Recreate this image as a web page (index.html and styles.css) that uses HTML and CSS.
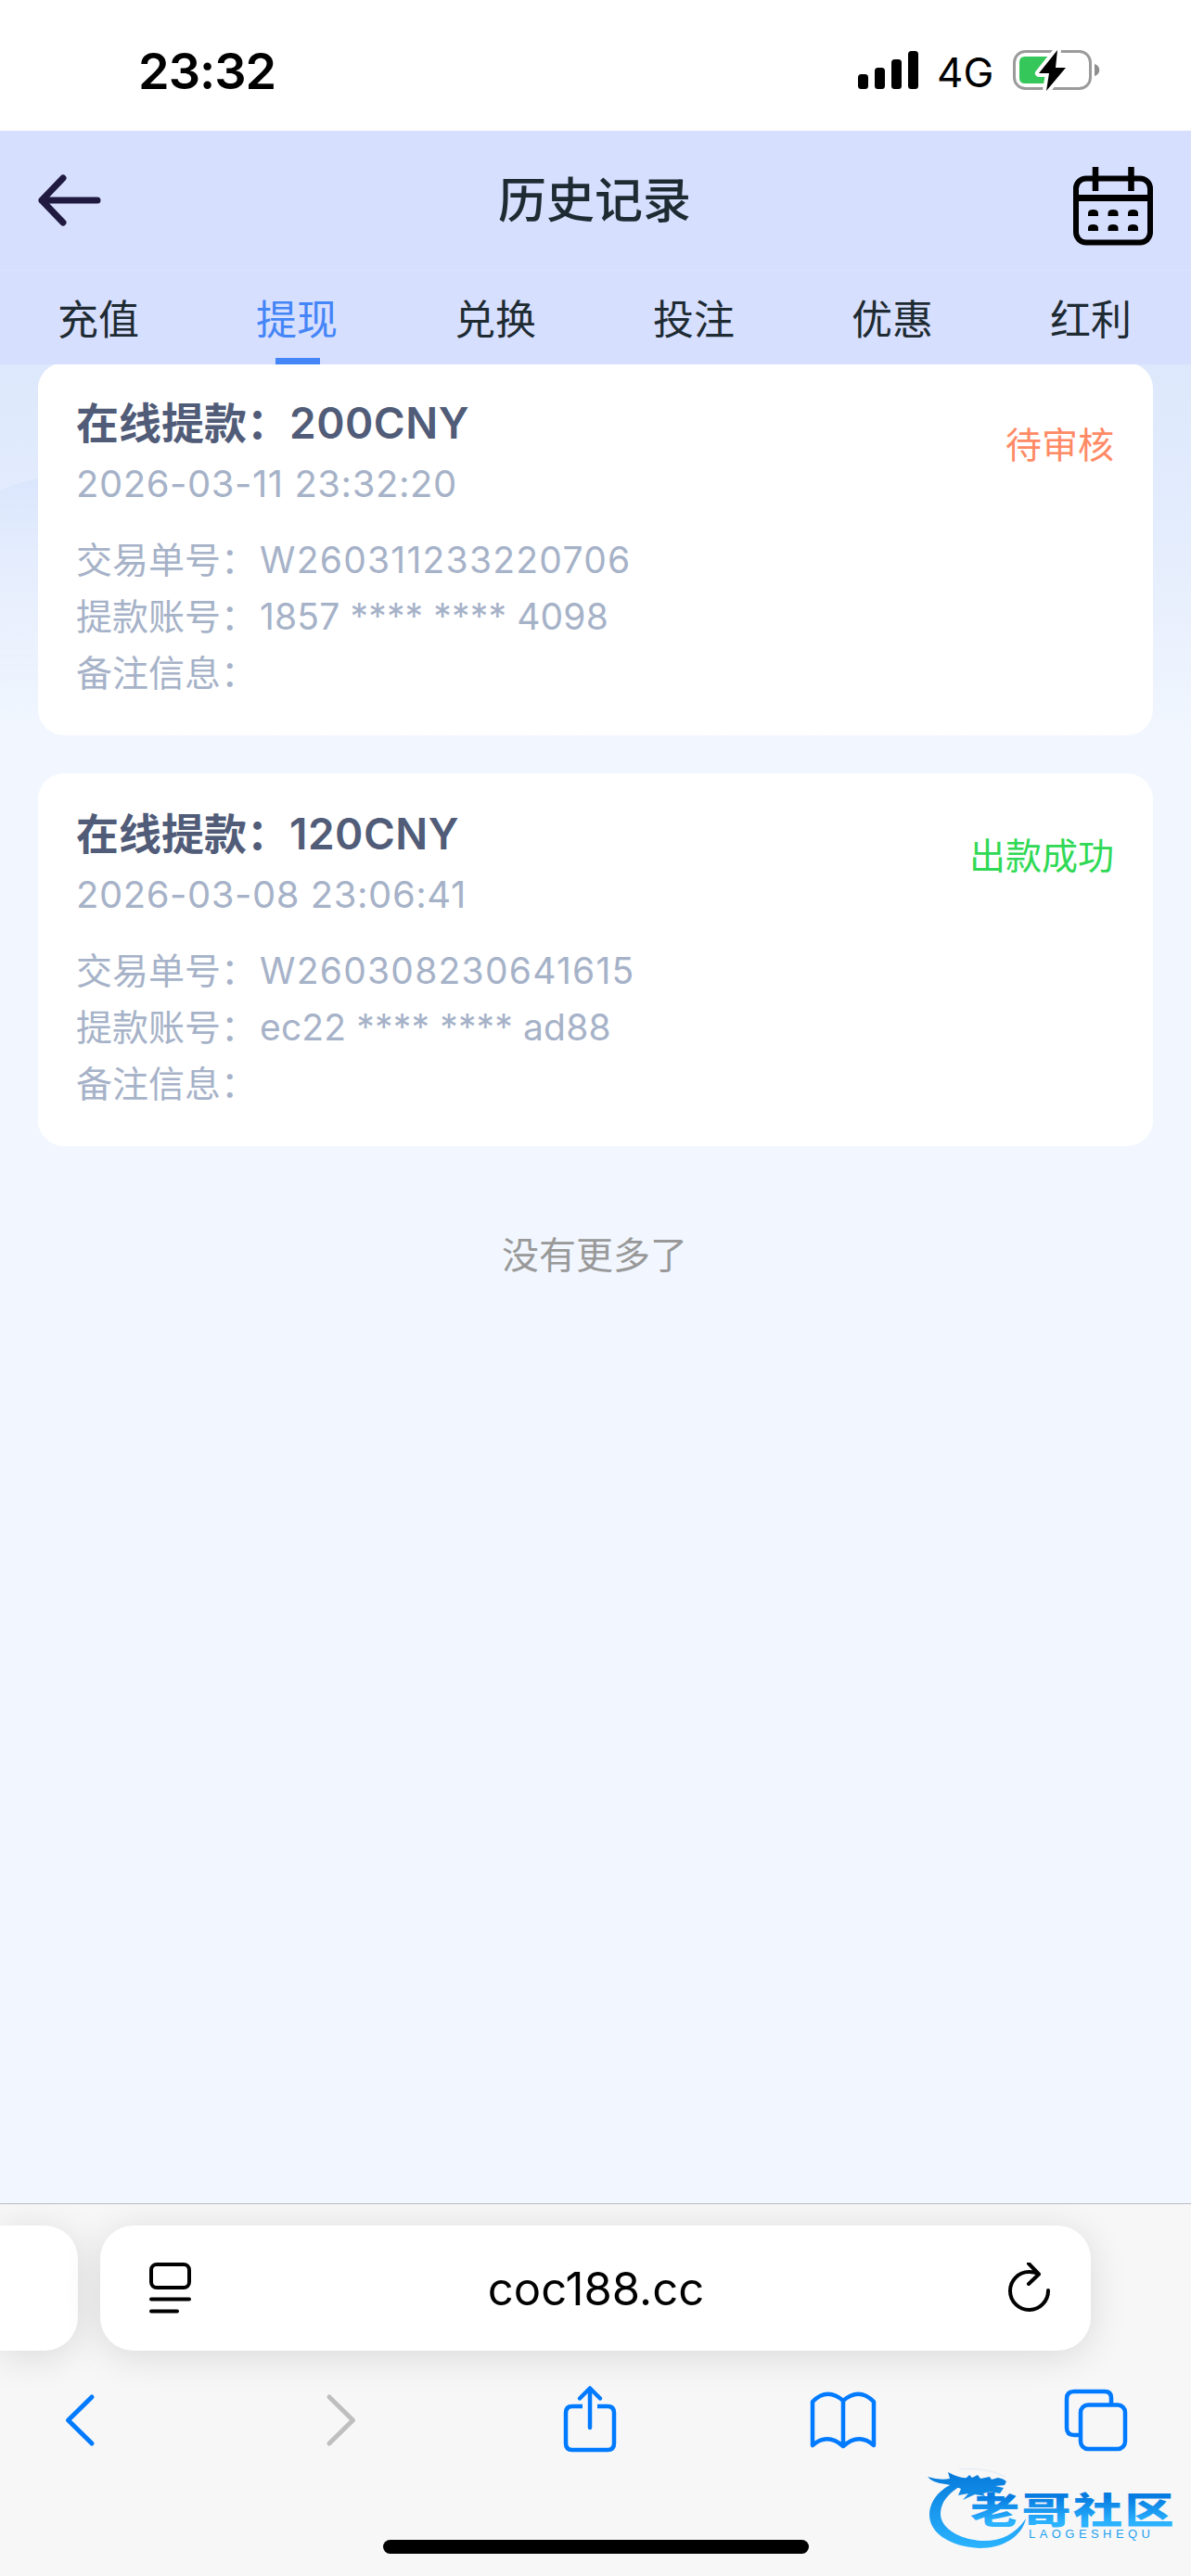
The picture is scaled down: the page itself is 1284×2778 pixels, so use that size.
FILE: index.html
```html
<!DOCTYPE html>
<html lang="zh-CN">
<head>
    <meta charset="UTF-8">
    <meta name="viewport" content="width=device-width, initial-scale=1.0">
    <title>历史记录</title>
    <link rel="stylesheet" href="styles.css">
</head>
<body>
    <div class="status-bar">
        <span class="time">23:32</span>
        <div class="status-icons">
            <svg class="signal" width="66" height="42" viewBox="0 0 66 42">
                <rect x="0" y="25" width="11" height="16" rx="3.5"/>
                <rect x="18" y="18" width="11" height="23" rx="3.5"/>
                <rect x="36" y="9" width="11" height="32" rx="3.5"/>
                <rect x="54" y="0" width="11" height="41" rx="3.5"/>
            </svg>
            <span class="network">4G</span>
            <svg class="battery" width="96" height="46" viewBox="0 0 96 46">
                <rect x="1.5" y="2.5" width="82" height="40" rx="12" fill="none" stroke="#9b9b9b" stroke-width="3"/>
                <path d="M88 16c7 2 7 11 0 13z" fill="#8e8e8e"/>
                <path d="M13 8h25v29H13q-6 0-6-6V14q0-6 6-6z" fill="#35c759"/>
                <path d="M48 1 28 26h11l-3 19 21-25H46z" fill="#000" stroke="#fff" stroke-width="8" stroke-linejoin="round" paint-order="stroke"/>
            </svg>
        </div>
    </div>

    <header class="page-header">
        <div class="title-bar">
            <svg class="back" width="70" height="58" viewBox="0 0 70 58">
                <path d="M28 5 5 29l23 24M5 29h60" fill="none" stroke="#211a40" stroke-width="7" stroke-linecap="round" stroke-linejoin="round"/>
            </svg>
            <h1>历史记录</h1>
            <svg class="calendar" width="86" height="86" viewBox="0 0 86 86">
                <rect x="3" y="12.5" width="80" height="69" rx="11" fill="none" stroke="#000" stroke-width="6"/>
                <path d="M3 33.5h80" stroke="#000" stroke-width="7"/>
                <path d="M24 0v26M62.500 0v26" stroke="#000" stroke-width="6.500"/>
                <path d="M16 53v-3q0-4 5.500-4t5.500 4v3zM37.500 53v-3q0-4 5.500-4t5.500 4v3zM59 53v-3q0-4 5.500-4t5.500 4v3zM16 69v-3q0-4 5.500-4t5.500 4v3zM37.500 69v-3q0-4 5.500-4t5.500 4v3zM59 69v-3q0-4 5.500-4t5.500 4v3z"/>
            </svg>
        </div>
        <nav class="tabs">
            <a>充值</a>
            <a class="active">提现</a>
            <a>兑换</a>
            <a>投注</a>
            <a>优惠</a>
            <a>红利</a>
        </nav>
    </header>

    <main class="content">
        <svg class="wave" width="240" height="300" viewBox="0 0 240 300">
            <defs>
                <linearGradient id="waveFill" x1="0" y1="0" x2="0" y2="1">
                    <stop offset="0" stop-color="#d9e5fc"/>
                    <stop offset="1" stop-color="#f2f6ff" stop-opacity="0"/>
                </linearGradient>
            </defs>
            <path d="M0 20Q30 6 90 0h150v230H0z" fill="url(#waveFill)"/>
        </svg>
        <section class="card">
            <div class="card-top">
                <div>
                    <div class="amount">在线提款：<span class="money">200CNY</span></div>
                    <div class="date">2026-03-11 23:32:20</div>
                </div>
                <div class="state pending">待审核</div>
            </div>
            <div class="row">交易单号：<span class="order">W260311233220706</span></div>
            <div class="row">提款账号：<span class="account">1857 **** **** 4098</span></div>
            <div class="row">备注信息：</div>
        </section>
        <section class="card">
            <div class="card-top">
                <div>
                    <div class="amount">在线提款：<span class="money">120CNY</span></div>
                    <div class="date">2026-03-08 23:06:41</div>
                </div>
                <div class="state success">出款成功</div>
            </div>
            <div class="row">交易单号：<span class="order">W260308230641615</span></div>
            <div class="row">提款账号：<span class="account">ec22 **** **** ad88</span></div>
            <div class="row">备注信息：</div>
        </section>
        <div class="no-more">没有更多了</div>
    </main>

    <footer class="browser-bar">
        <div class="address-row">
            <div class="prev-tab"></div>
            <div class="address">
                <svg width="46" height="56" viewBox="0 0 46 56" fill="none" stroke="#000" stroke-width="4" stroke-linecap="round">
                    <rect x="2" y="2" width="41" height="25" rx="6"/>
                    <path d="M2 39.500h41M2 52.500h28"/>
                </svg>
                <span class="url">coc188.cc</span>
                <svg width="46" height="56" viewBox="0 0 46 56" fill="none" stroke="#000" stroke-width="4" stroke-linecap="round" stroke-linejoin="round">
                    <path d="M43 30A20.500 20.500 0 1 1 22.500 10q5 0 10 2M22 1l11 11.500L22 23"/>
                </svg>
            </div>
        </div>
        <div class="toolbar">
            <svg width="80" height="84" viewBox="0 0 80 84"><path d="M52 17 26.500 42 52 67"/></svg>
            <svg class="disabled" width="80" height="84" viewBox="0 0 80 84"><path d="M34 17 59.500 42 34 67"/></svg>
            <svg width="80" height="84" viewBox="0 0 80 84"><path d="M33 27H22q-7 0-7 7v33q0 7 7 7h38q7 0 7-7V34q0-7-7-7H49"/><path d="M41 50V8M30 18.500 41 7.500l11 11" stroke-linecap="round"/></svg>
            <svg width="80" height="84" viewBox="0 0 80 84"><path d="M8 22Q24 6 41 21 58 6 74 22V69Q58 55 41 70 24 55 8 69zM41 21v49"/></svg>
            <svg width="80" height="84" viewBox="0 0 80 84"><path d="M22 58h-6q-8 0-8-8V19q0-8 8-8h33q7 0 7 7v6"/><rect x="23" y="25.500" width="48" height="47.500" rx="8"/></svg>
        </div>
        <div class="home-indicator"></div>
        <svg class="watermark" width="270" height="94" viewBox="0 0 270 94">
            <defs>
                <linearGradient id="ring" x1="0" y1="8" x2="0" y2="88" gradientUnits="userSpaceOnUse">
                    <stop offset="0" stop-color="#077bdc"/>
                    <stop offset="1" stop-color="#2bb4ff"/>
                </linearGradient>
                <linearGradient id="word" x1="0" y1="0" x2="0" y2="1">
                    <stop offset="0.300" stop-color="#067be0"/>
                    <stop offset="0.800" stop-color="#2cb3ff"/>
                </linearGradient>
            </defs>
            <path d="M42 14C16 19 2 35 2 52c0 21 25 35 54 36 26 0 46-13 50-32C94 74 77 81 58 80 33 78 14 66 14 51c0-14 10-24 27-33z" fill="url(#ring)"/>
            <path d="M0 11q13 4 24 2l-2-7q13 7 20 6l3-3 3 3 6-3 3 4 10-2 2 3 7-2q6 1 9 4l-2 4-10 1 9 2-4 6-11-2-7 2 2 3-11-2-13 6 6-7-11 2 3-7-7-3-9-2Q6 18 0 11z" fill="url(#ring)"/>
            <path d="M34 3q28-3 50 8" fill="none" stroke="#dfeaf3" stroke-width="1"/>
            <text class="wm-name" transform="translate(46 61) scale(1.36 1)" fill="url(#word)">老哥社区</text>
            <text class="wm-sub" x="109" y="77" textLength="131" fill="#1da0ef">LAOGESHEQU</text>
        </svg>
    </footer>
</body>
</html>
```
FILE: styles.css
```css
* {
    box-sizing: border-box;
}
body {
    font-family: Inter, "Noto Sans CJK SC", sans-serif;
    background-color: #f2f7ff;
    color: #1e2b32;
    margin: 0;
    height: 2778px;
    display: flex;
    flex-direction: column;
    overflow: hidden;
}
svg {
    display: block;
    flex: none;
}
h1 {
    margin: 0;
}

/* phone status bar */
.status-bar {
    height: 141px;
    flex: none;
    background-color: #fff;
    color: #000;
    display: flex;
    justify-content: space-between;
    padding: 0 96px 0 149px;
}
.time {
    font-size: 54px;
    font-weight: 600;
    letter-spacing: -1px;
    line-height: 154px;
}
.status-icons {
    display: flex;
    align-items: flex-start;
}
.signal {
    margin-top: 55px;
}
.network {
    width: 62px;
    margin: 0 20px 0 19px;
    font-size: 44px;
    line-height: 156px;
}
.battery {
    margin-top: 53px;
}

/* header */
.page-header {
    height: 252px;
    flex: none;
    background-color: #d7dfff;
    position: relative;
    z-index: 1;
}
.title-bar {
    height: 151px;
    display: flex;
    justify-content: space-between;
    align-items: center;
    padding: 0 41px 0 40px;
    border-bottom: 1px solid #dbe3ff;
}
.title-bar .back {
    margin-right: 15px;
}
.calendar {
    margin-top: 13px;
}
h1 {
    padding-top: 2px;
    font-size: 52px;
    font-weight: 500;
    line-height: 1;
}
.tabs {
    display: flex;
    height: 101px;
}
.tabs a {
    flex: 1;
    display: flex;
    flex-direction: column;
    align-items: center;
    justify-content: space-between;
    padding-top: 21px;
    font-size: 44px;
    line-height: 64px;
    text-indent: -2px;
}
.tabs a.active {
    color: #4485f8;
}
.tabs a.active::after {
    content: "";
    width: 48px;
    height: 7px;
    background-color: #4485f8;
}

/* record list */
.content {
    flex: 1;
    position: relative;
    padding: 0 41px;
    background: linear-gradient(#dde8fc 0, #e2ecfd 150px, #e8effd 250px, #f2f7ff 410px);
}
.wave {
    position: absolute;
    left: 0;
    top: 116px;
    -webkit-mask-image: linear-gradient(90deg, #000 60px, transparent);
}
.card {
    position: relative;
    height: 402px;
    margin-bottom: 41px;
    padding: 35px 42px 0 41px;
    border-radius: 28px;
    background-color: #fff;
    color: #a6b2c8;
}
.card:nth-of-type(1) {
    margin-top: -2px;
}
.card-top {
    display: flex;
    justify-content: space-between;
    height: 147px;
}
.amount {
    color: #515c78;
    font-size: 46px;
    font-weight: 600;
    line-height: 60px;
}
.money {
    letter-spacing: 0.5px;
}
.date {
    font-size: 40px;
    line-height: 72px;
    letter-spacing: 0.55px;
}
.state {
    font-size: 39px;
    line-height: 108px;
}
.pending {
    color: #ff8a65;
}
.success {
    color: #30d955;
}
.row {
    font-size: 39px;
    line-height: 61px;
    height: 61px;
}
.row span {
    margin-left: 3px;
}
.order {
    letter-spacing: 1.25px;
}
.account {
    letter-spacing: 0.15px;
}
.no-more {
    color: #999;
    font-size: 40px;
    line-height: 60px;
    padding: 47px 2px 0 0;
    text-align: center;
}

/* browser chrome */
.browser-bar {
    position: relative;
    height: 402px;
    flex: none;
    background-color: #f7f7f8;
    border-top: 1px solid #bcbdc0;
    overflow: hidden;
}
.address-row {
    display: flex;
    gap: 24px;
    padding-top: 23px;
}
.prev-tab,
.address {
    height: 135px;
    background-color: #fff;
    box-shadow: 0 6px 42px rgba(0, 0, 0, 0.12);
}
.prev-tab {
    width: 84px;
    border-radius: 0 36px 36px 0;
}
.address {
    width: 1068px;
    border-radius: 36px;
    display: flex;
    align-items: center;
    justify-content: space-between;
    padding: 0 43px 0 53px;
}
.url {
    margin-right: 9px;
    padding-top: 2px;
    color: #000;
    font-size: 49px;
}
.toolbar {
    display: flex;
    justify-content: space-between;
    padding: 33px 62px 0 47px;
}
.toolbar svg {
    fill: none;
    stroke: #007aff;
    stroke-width: 4.5;
    stroke-linejoin: round;
}
.toolbar svg:nth-child(-n+2) {
    stroke-linecap: round;
    stroke-width: 5;
}
.toolbar svg.disabled {
    stroke: #bfbfbf;
}
.home-indicator {
    width: 459px;
    height: 15px;
    margin: 87px auto 0;
    border-radius: 8px;
    background-color: #000;
}
.watermark {
    position: absolute;
    left: 1000px;
    top: 283px;
}
.wm-name {
    font-family: "Noto Sans CJK SC", sans-serif;
    font-size: 39px;
    font-weight: 900;
    letter-spacing: 1.8px;
}
.wm-sub {
    font-family: "Liberation Sans", sans-serif;
    font-size: 13px;
}
```
